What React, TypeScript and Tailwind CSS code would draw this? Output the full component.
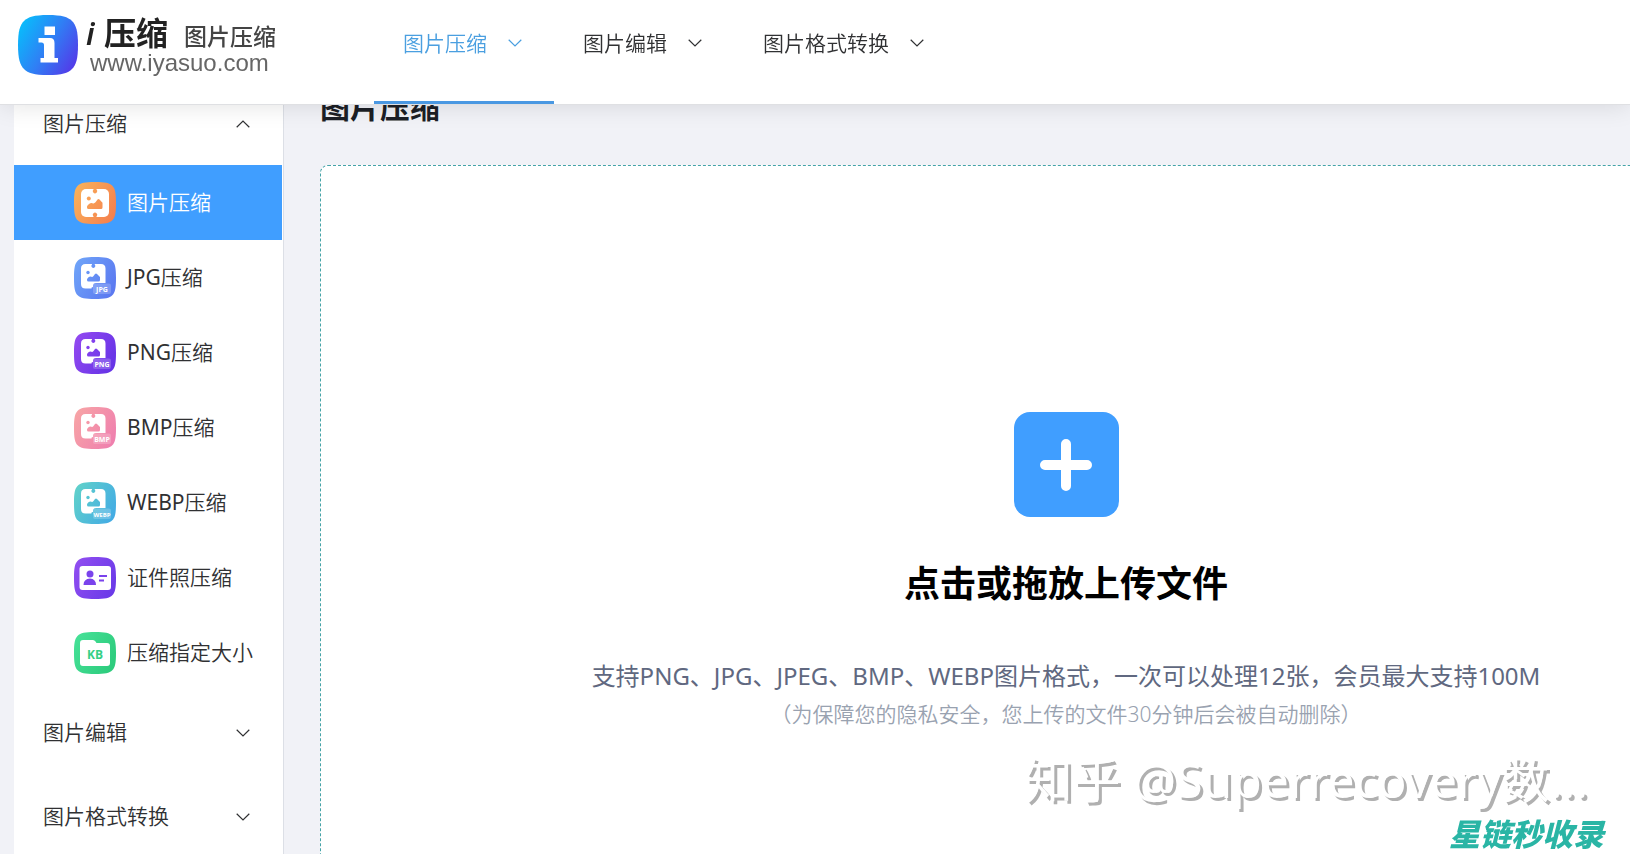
import React, { useState } from 'react';
import { clsx } from 'clsx';

type Badge = 'none' | 'JPG' | 'PNG' | 'BMP' | 'WEBP';

interface IconProps {
  id: string;
  from: string;
  to: string;
}

const IconBase: React.FC<IconProps & { children: React.ReactNode }> = ({ id, from, to, children }) => (
  <svg width="42" height="42" viewBox="0 0 42 42" className="shrink-0" aria-hidden="true">
    <defs>
      <linearGradient id={id} gradientUnits="userSpaceOnUse" x1="0" y1="10" x2="42" y2="32">
        <stop offset="0" stopColor={from} />
        <stop offset="1" stopColor={to} />
      </linearGradient>
    </defs>
    <path
      d="M21 0C31 0 35.5 0.800 38.3 3.700C41.200 6.500 42 11 42 21C42 31 41.200 35.500 38.300 38.300C35.500 41.200 31 42 21 42C11 42 6.500 41.200 3.700 38.300C0.800 35.500 0 31 0 21C0 11 0.800 6.500 3.700 3.700C6.500 0.800 11 0 21 0Z"
      fill={`url(#${id})`}
    />
    {children}
  </svg>
);

const PictureIcon: React.FC<IconProps & { badge: Badge }> = ({ badge, ...rest }) => {
  const fill = `url(#${rest.id})`;
  if (badge === 'none') {
    return (
      <IconBase {...rest}>
        <rect x="7" y="7" width="28" height="28" rx="5" fill="#fff" />
        <path d="M19.500 6.500H22.500V7.500A2.200 2.200 0 1 1 19.500 7.500Z" fill={fill} />
        <path d="M19.500 35.500H22.500V34.500A2.200 2.200 0 1 0 19.500 34.500Z" fill={fill} />
        <circle cx="14.800" cy="16.500" r="2" fill={fill} />
        <path
          d="M13 25.500V24.500Q13 23.500 15 22Q17 20.500 18.500 21.200Q20 22 21.500 20.300L23.500 17.600Q24.500 16.500 25.500 17.500L28.500 20.800V25.500Q28.500 27 27 27H14.500Q13 27 13 25.500Z"
          fill={fill}
        />
      </IconBase>
    );
  }
  return (
    <IconBase {...rest}>
      <path
        d="M11.500 7H27Q31.500 7 31.500 11.500V26H22Q19 26 19 29V30Q17 30 17.500 31.500H11.500Q7 31.500 7 27V11.500Q7 7 11.500 7Z"
        fill="#fff"
      />
      <path d="M18 6.500H20.700V7.500A2 2 0 1 1 18 7.500Z" fill={fill} />
      <circle cx="14" cy="15.500" r="1.700" fill={fill} />
      <path
        d="M13 23V22.500Q13 21.500 14.500 20.300Q16 19.200 17.500 19.800Q18.500 20.200 19.700 18.700L21 17Q22 16 23 17L26 20V23Q26 24.500 24.500 24.500H14.500Q13 24.500 13 23Z"
        fill={fill}
      />
      <rect x="19" y="26.500" width="18" height="10.500" rx="2" fill="#fff" fillOpacity="0.2" />
      <text
        x="28"
        y="34.500"
        textAnchor="middle"
        fill="#fff"
        fontFamily="Open Sans, sans-serif"
        fontWeight="700"
        fontSize={badge === 'WEBP' ? 6 : 7}
      >
        {badge}
      </text>
    </IconBase>
  );
};

const IdCardIcon: React.FC = () => (
  <IconBase id="idcard" from="#8f4df0" to="#6a3ae8">
    <rect x="5.500" y="9" width="31.500" height="24" rx="3" fill="#fff" />
    <circle cx="16" cy="17" r="3.500" fill="#7a43ec" />
    <path d="M9.500 28Q9.500 22 16 21.500Q22 22 22 28Z" fill="#7a43ec" />
    <path d="M25 19H33M25 23.500H30" stroke="#7a43ec" strokeWidth="2" />
  </IconBase>
);

const FolderIcon: React.FC = () => (
  <IconBase id="folder" from="#45e096" to="#2ccb7c">
    <path d="M9 8H19Q20.500 8 21.500 9.500L22.500 11H33Q36 11 36 14V31Q36 34 33 34H9Q6 34 6 31V11Q6 8 9 8Z" fill="#fff" />
    <text x="21" y="27" textAnchor="middle" fill="#35cf85" fontFamily="Open Sans, sans-serif" fontWeight="700" fontSize="12">
      KB
    </text>
  </IconBase>
);

const Chevron: React.FC<{ up?: boolean }> = ({ up }) => (
  <svg
    width="14"
    height="8"
    viewBox="0 0 14 8"
    fill="none"
    stroke="currentColor"
    strokeWidth="1.2"
    className={clsx('shrink-0', up && 'rotate-180')}
    aria-hidden="true"
  >
    <path d="M0.700 0.800L7 7L13.300 0.800" />
  </svg>
);

const menu = [
  { format: '', label: '图片压缩', icon: <PictureIcon id="all" from="#f9b05a" to="#f5804e" badge="none" /> },
  { format: 'JPG', label: '压缩', icon: <PictureIcon id="jpg" from="#6ea2f8" to="#5b78f0" badge="JPG" /> },
  { format: 'PNG', label: '压缩', icon: <PictureIcon id="png" from="#9148f0" to="#6533e6" badge="PNG" /> },
  { format: 'BMP', label: '压缩', icon: <PictureIcon id="bmp" from="#f7a3a6" to="#ef7fae" badge="BMP" /> },
  { format: 'WEBP', label: '压缩', icon: <PictureIcon id="webp" from="#5fd0cb" to="#43abe4" badge="WEBP" /> },
  { format: '', label: '证件照压缩', icon: <IdCardIcon /> },
  { format: '', label: '压缩指定大小', icon: <FolderIcon /> },
];

const navItems = ['图片压缩', '图片编辑', '图片格式转换'];

const Logo: React.FC = () => (
  <a href="#" className="flex w-[374px] shrink-0 gap-2 pt-[15px] pl-[18px]">
    <svg width="60" height="60" viewBox="0 0 60 60" className="shrink-0" aria-hidden="true">
      <defs>
        <linearGradient id="logo" x1="0" y1="0.2" x2="1" y2="0.8">
          <stop offset="0" stopColor="#08bdfb" />
          <stop offset="0.500" stopColor="#2f80f5" />
          <stop offset="1" stopColor="#5438e8" />
        </linearGradient>
      </defs>
      <path
        d="M30 0C44 0 50 2 54 6C58 10 60 16 60 30C60 44 58 50 54 54C50 58 44 60 30 60C16 60 10 58 6 54C2 50 0 44 0 30C0 16 2 10 6 6C10 2 16 0 30 0Z"
        fill="url(#logo)"
      />
      <path d="M26.500 11.500H37V20H26.500ZM20.500 23H32Q36.500 23 36.500 28V43H40V47.500H22.500V43H26V30Q26 27.500 23.500 27.500H20.500Z" fill="#fff" />
    </svg>
    <span className="flex flex-col">
      <span className="flex h-9 items-baseline leading-9 text-[#222]">
        <i className="w-[18px] text-[30px] font-semibold">i</i>
        <b className="text-[32px] font-bold">压缩</b>
        <span className="pl-4 text-[23px] font-medium text-[#444]">图片压缩</span>
      </span>
      <span className="pl-1 font-['Liberation_Sans',sans-serif] text-2xl leading-6 text-[#666]">www.iyasuo.com</span>
    </span>
  </a>
);

const Header: React.FC = () => (
  <header className="fixed inset-x-0 top-0 z-10 flex h-[105px] border-b border-[#dfe0e3] bg-white shadow-[0_0_24px_rgba(0,0,0,0.12)]">
    <Logo />
    <nav className="flex text-[21px] font-[350] text-[#303133]">
      {navItems.map((item, i) => (
        <a
          key={item}
          href="#"
          className={clsx(
            'flex h-[104px] items-start gap-[21px] border-b-3 pt-[27px] pr-8 pl-[29px] leading-8',
            i === 0 ? 'border-[#4a98e2] text-[#4a9fe0]' : 'border-transparent'
          )}
        >
          {item}
          <span className="flex h-8 items-center">
            <Chevron />
          </span>
        </a>
      ))}
    </nav>
  </header>
);

const Sidebar: React.FC = () => {
  const [active, setActive] = useState(0);
  const groupClass = 'flex h-[84px] w-full items-center justify-between pt-px pr-8 pl-[29px]';

  return (
    <aside className="ml-[14px] w-[270px] shrink-0 border-r border-[#dcdfe6] bg-white pr-px text-[21px] font-[350] text-[#303133]">
      <button type="button" className={groupClass}>
        图片压缩
        <Chevron up />
      </button>
      <ul>
        {menu.map((item, i) => (
          <li key={item.format + item.label}>
            <button
              type="button"
              onClick={() => setActive(i)}
              className={clsx(
                'flex h-[75px] w-full items-center gap-[11px] pt-px pl-[60px]',
                active === i && 'bg-[#409eff] text-white'
              )}
            >
              {item.icon}
              <span>
                {item.format && <span className="font-normal">{item.format}</span>}
                {item.label}
              </span>
            </button>
          </li>
        ))}
      </ul>
      {navItems.slice(1).map((item) => (
        <button key={item} type="button" className={groupClass}>
          {item}
          <Chevron />
        </button>
      ))}
    </aside>
  );
};

const Uploader: React.FC = () => (
  <div className="-mr-[182px] -mb-4 flex flex-1 flex-col items-center rounded-lg border border-dashed border-[#45a3a8] bg-white pt-[246px]">
    <button type="button" aria-label="上传" className="flex size-[105px] items-center justify-center rounded-2xl bg-[#409eff]">
      <svg width="54" height="54" viewBox="0 0 54 54" stroke="#fff" strokeWidth="10" strokeLinecap="round" aria-hidden="true">
        <path d="M27 6V48M6 27H48" />
      </svg>
    </button>
    <h2 className="mt-10 text-4xl leading-[54px] font-bold text-black">点击或拖放上传文件</h2>
    <p className="mt-[46px] text-2xl leading-[38px] text-[#606880]">
      支持PNG、JPG、JPEG、BMP、WEBP图片格式，一次可以处理12张，会员最大支持100M
    </p>
    <p className="text-[21px] leading-[38px] font-[350] text-[#99a2b0]">（为保障您的隐私安全，您上传的文件30分钟后会被自动删除）</p>
  </div>
);

const App: React.FC = () => {
  return (
    <div className="flex h-screen overflow-hidden bg-[#f1f2f7] pt-[81px] font-['Noto_Sans','Noto_Sans_CJK_SC',sans-serif]">
      <Header />
      <Sidebar />
      <main className="flex min-w-0 flex-1 flex-col pl-9">
        <h1 className="h-[84px] text-3xl leading-[52px] font-bold text-[#1c1f26]">图片压缩</h1>
        <Uploader />
      </main>
      <div className="pointer-events-none fixed right-[26px] bottom-1 flex flex-col items-end whitespace-nowrap">
        <span className="pr-4 pb-1 text-5xl leading-[68px] text-white [text-shadow:3px_3px_0_#b0b0b0]">知乎 @Superrecovery数...</span>
        <span className="text-[31px] leading-8 font-black text-[#2ab5a5] italic">星链秒收录</span>
      </div>
    </div>
  );
};

export default App;
